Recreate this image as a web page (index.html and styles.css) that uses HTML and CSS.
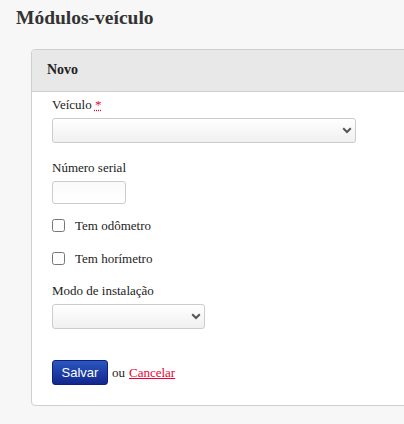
FILE: index.html
```html
<!DOCTYPE html>
<html lang="pt">
<head>
<meta charset="utf-8">
<title>Módulos-veículo</title>
<link rel="stylesheet" href="styles.css">
</head>
<body>
<h1 class="page-title">Módulos-veículo</h1>
<div class="panel">
  <div class="panel-header">Novo</div>
  <form class="panel-body">
    <div class="field field-first">
      <label class="field-label">Veículo <abbr class="required" title="obrigatório">*</abbr></label>
      <span class="select-wrap">
        <select class="select select-wide"><option></option></select>
        <svg class="chevron" width="10" height="7" viewBox="0 0 10 7"><path d="M1.2 1.3 L5 5 L8.8 1.3" fill="none" stroke="#555" stroke-width="2"/></svg>
      </span>
    </div>
    <div class="field field-serial">
      <label class="field-label">Número serial</label>
      <input class="text-input" type="text">
    </div>
    <label class="check-row"><input class="checkbox" type="checkbox"><span>Tem odômetro</span></label>
    <label class="check-row check-row-last"><input class="checkbox" type="checkbox"><span>Tem horímetro</span></label>
    <div class="field field-last">
      <label class="field-label">Modo de instalação</label>
      <span class="select-wrap">
        <select class="select select-narrow"><option></option></select>
        <svg class="chevron" width="10" height="7" viewBox="0 0 10 7"><path d="M1.2 1.3 L5 5 L8.8 1.3" fill="none" stroke="#555" stroke-width="2"/></svg>
      </span>
    </div>
    <div class="actions">
      <button class="btn-primary" type="button">Salvar</button>
      <span class="or">ou</span>
      <a class="cancel" href="#">Cancelar</a>
    </div>
  </form>
</div>
</body>
</html>
```
FILE: styles.css
```css
html {
  overflow: hidden;
}
body {
  margin: 0;
  background: #f7f7f7;
  font-family: "Liberation Serif", "Times New Roman", serif;
  font-size: 13px;
  color: #222;
}
.page-title {
  margin: 7px 0 21px 16px;
  font-size: 19.5px;
  font-weight: bold;
  color: #333;
  line-height: 21px;
}
.panel {
  margin-left: 31px;
  width: 400px;
  background: #fff;
  border: 1px solid #cfcfcf;
  border-radius: 4px;
}
.panel-header {
  background: #e8e8e8;
  border-bottom: 1px solid #cfcfcf;
  border-radius: 4px 0 0 0;
  padding: 12px 15px 13px;
  font-size: 14px;
  line-height: 16px;
  font-weight: bold;
  color: #222;
}
.panel-body {
  padding: 6px 20px 20px;
  display: flex;
  flex-direction: column;
}
.field {
  display: flex;
  flex-direction: column;
  align-items: flex-start;
}
.field-first {
  margin-bottom: 18px;
}
.field-serial {
  margin-bottom: 15px;
}
.field-last {
  margin-bottom: 31px;
}
.field-label {
  line-height: 14px;
  margin-bottom: 6px;
}
.required {
  color: #e8003a;
  text-decoration: underline dotted;
  border: none;
}
.select-wrap {
  position: relative;
  display: inline-block;
  line-height: 0;
}
.select {
  -webkit-appearance: none;
  appearance: none;
  height: 25px;
  border: 1px solid #cccccc;
  border-radius: 3px;
  background: linear-gradient(#ffffff, #f0f0f0);
  font-family: "Liberation Sans", Arial, sans-serif;
  font-size: 13px;
  margin: 0;
}
.chevron {
  position: absolute;
  right: 4px;
  top: 9px;
}
.select-wide {
  width: 304px;
}
.select-narrow {
  width: 153px;
}
.text-input {
  width: 74px;
  height: 23px;
  box-sizing: border-box;
  border: 1px solid #cccccc;
  border-radius: 3px;
  background: linear-gradient(#fafafa, #ffffff);
  margin: 0;
  padding: 2px 4px;
}
.check-row {
  display: flex;
  align-items: center;
  height: 13px;
  margin-bottom: 20px;
}
.check-row-last {
  margin-bottom: 19px;
}
.checkbox {
  width: 13px;
  height: 13px;
  margin: 0 10px 0 0;
}
.actions {
  display: flex;
  align-items: center;
  gap: 4px;
}
.btn-primary {
  height: 25px;
  width: 56px;
  padding: 0;
  border: 1px solid #0d2080;
  border-radius: 3px;
  background: linear-gradient(#2b56bf, #12278e);
  color: #fff;
  font-family: "Liberation Sans", Arial, sans-serif;
  font-size: 13px;
}
.or {
  color: #222;
}
.cancel {
  color: #ee0033;
  text-decoration: underline;
}
```
